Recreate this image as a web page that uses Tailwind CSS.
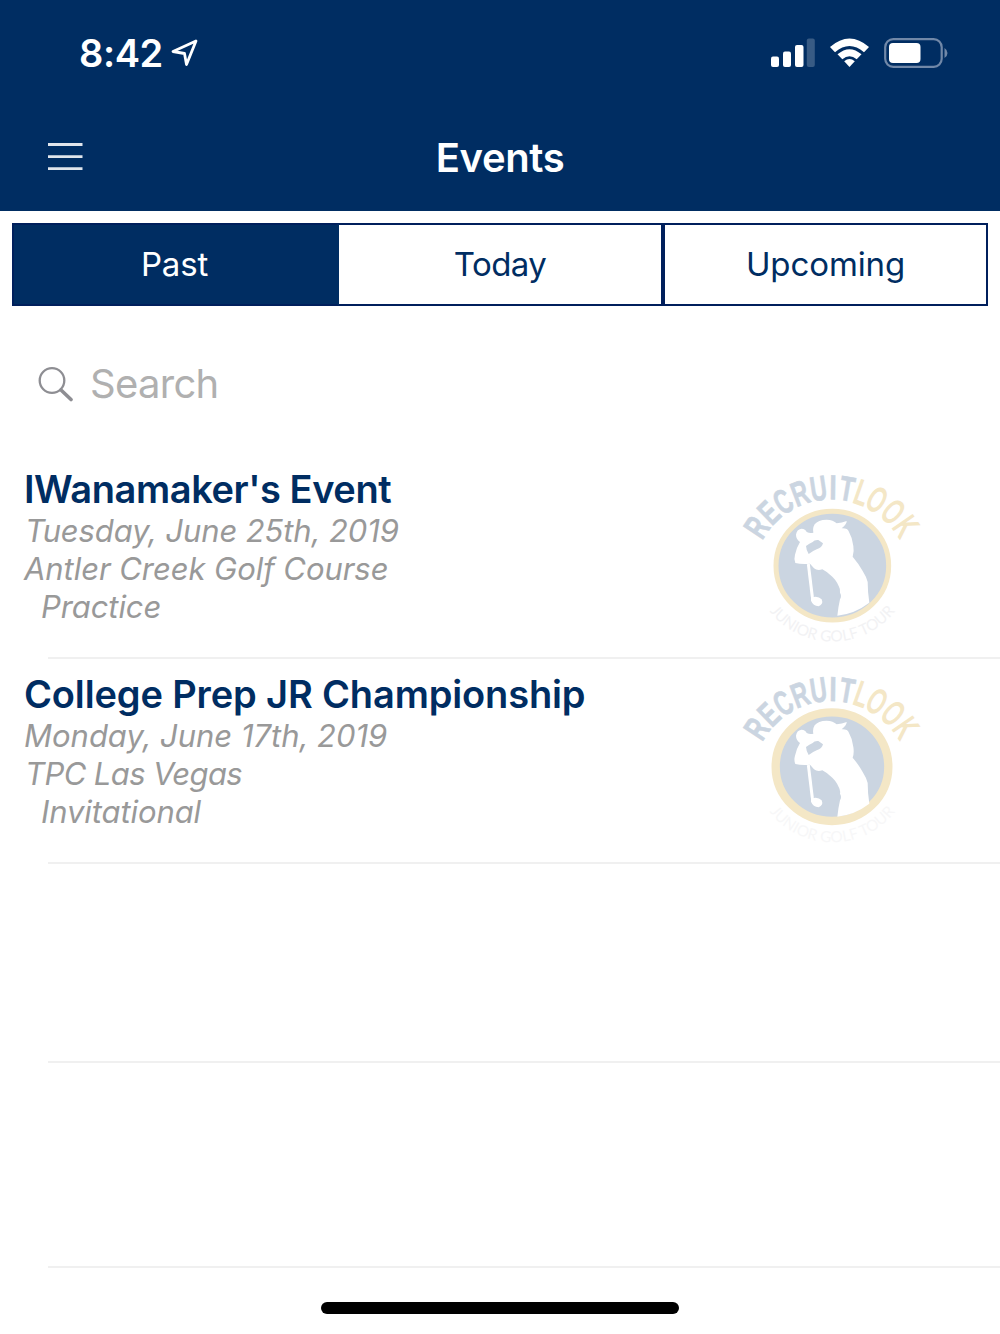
<!DOCTYPE html>
<html lang="en">
  <head>
    <meta charset="UTF-8" />
    <meta name="viewport" content="width=device-width, initial-scale=1.0" />
    <title>Events</title>
    <script src="https://cdn.jsdelivr.net/npm/@tailwindcss/browser@4"></script>
  </head>
  <body class="bg-white font-['Inter',sans-serif] text-[#002d62]">
    <!-- shared logo parts -->
    <svg class="hidden">
      <defs>
        <path id="bottom-arc" d="M67 305A240 240 0 0 0 547 305" />
        <g id="logo-text" font-family="Liberation Sans, sans-serif" font-size="104" text-anchor="middle">
          <g fill="#cbd5e1" stroke="#cbd5e1" stroke-width="2" font-weight="700">
            <text transform="rotate(-56 305 353) translate(305 118) scale(.66 1)">R</text>
            <text transform="rotate(-44 305 353) translate(305 118) scale(.66 1)">E</text>
            <text transform="rotate(-32.500 305 353) translate(305 118) scale(.64 1)">C</text>
            <text transform="rotate(-20.500 305 353) translate(305 118) scale(.66 1)">R</text>
            <text transform="rotate(-8.500 305 353) translate(305 118) scale(.66 1)">U</text>
            <text transform="rotate(.8 305 353) translate(305 118) scale(.75 1)">I</text>
            <text transform="rotate(9.800 305 353) translate(305 118) scale(.7 1)">T</text>
          </g>
          <g fill="#f4e7c6" stroke="#f4e7c6" stroke-width="5">
            <text transform="rotate(19.500 305 353) translate(305 118) scale(.66 1)">L</text>
            <text transform="rotate(30.200 305 353) translate(305 118) scale(.62 1)">O</text>
            <text transform="rotate(43 305 353) translate(305 118) scale(.62 1)">O</text>
            <text transform="rotate(55.200 305 353) translate(305 118) scale(.64 1)">K</text>
          </g>
        </g>
        <g id="golfer" fill="#fff">
          <path d="M322 467Q325 440 330 418Q336 408 330 398Q332 388 326 378Q318 358 300 344Q288 334 277 328Q262 333 252 325L240 311Q215 313 196 309Q191 298 195 284Q199 264 210 246Q198 237 198 224Q200 208 214 206Q227 207 230 216Q240 221 250 218Q247 204 254 193Q264 179 290 179Q310 180 320 190Q336 188 350 183Q351 192 335 205Q353 204 356 214Q368 235 370 258Q373 275 368 290Q386 311 398 333Q409 350 413 366Q413 395 418 428Q375 461 322 467Z" />
          <path d="M228 258Q238 250 248 246Q253 239 265 240L279 250Q276 263 260 268Q248 273 236 282Q229 272 228 258Z" fill="#cbd5e1" />
          <path d="M235 312L247 411" stroke="#fff" stroke-width="9" />
          <path d="M243 403L251 411Q265 408 275 418Q281 433 266 439Q249 437 243 422Z" />
        </g>
      </defs>
    </svg>

    <div class="flex h-[1334px] w-[1000px] flex-col overflow-hidden">
      <header class="h-[211px] shrink-0 bg-[#002d62] text-white">
        <!-- status bar -->
        <div class="flex h-[106px] items-center justify-between pl-[79px] pr-[52px]">
          <div class="flex items-center gap-[8px]">
            <span class="text-[38px] leading-none font-semibold tracking-[-0.4px]">8:42</span>
            <svg class="h-[28px] w-[27px]" viewBox="0 0 27 28" fill="none" stroke="#fff" stroke-width="2.8" stroke-linejoin="round">
              <path d="M25 2L2 12.500L13.500 14.500L15.500 25.500Z" />
            </svg>
          </div>
          <div class="flex items-center">
            <svg class="h-[30px] w-[45px]" viewBox="0 0 45 30" fill="#fff">
              <rect x="1" y="18.500" width="8" height="10.500" rx="2" />
              <rect x="13" y="13.500" width="8" height="15.500" rx="2" />
              <rect x="25" y="7" width="8.500" height="22" rx="2" />
              <rect x="36.800" y="0.500" width="8" height="28.500" rx="2" opacity=".22" />
            </svg>
            <svg class="ml-[14px] h-[30px] w-[41px]" viewBox="0 0 41 30" fill="#fff">
              <path d="M1 9Q20.500 -8 40 9L35 14.200Q20.500 1.700 6 14.200Z" />
              <path d="M8.500 16.300Q20.500 6 32.500 16.300L27.700 21.200Q20.500 15.200 13.300 21.200Z" />
              <path d="M15.200 23.200Q20.500 19 25.800 23.200L20.500 29Z" />
            </svg>
            <svg class="ml-[14px] h-[32px] w-[64px]" viewBox="0 0 64 32" fill="none">
              <rect x="1.200" y="2.200" width="56.500" height="27.600" rx="8" stroke="#7188a8" stroke-width="2.200" />
              <rect x="5" y="6" width="31.500" height="20" rx="4" fill="#fff" />
              <path d="M60.500 11Q63.500 13 63.500 16Q63.500 19 60.500 21Z" fill="#7188a8" />
            </svg>
          </div>
        </div>
        <div class="grid h-[102px] grid-cols-3 items-center">
          <svg class="ml-[48px] h-[30px] w-[35px]" viewBox="0 0 35 30" stroke="#e0e5ec" stroke-width="2.800">
            <path d="M0 2.500H34.500M0 14.700H34.500M0 26.700H34.500" />
          </svg>
          <h1 class="pt-[2px] text-center text-[40px] leading-none font-semibold tracking-[-0.4px]">Events</h1>
        </div>
      </header>

      <div class="mx-[12px] mt-[12px] grid h-[83px] shrink-0 grid-cols-[327px_324px_325px] text-[33px] text-[#002d62]">
        <button class="border-2 border-[#001f5c] border-r-[#002d62] bg-[#002d62] pr-[2px] tracking-[-0.2px] text-white">Past</button>
        <button class="border-2 border-l-0 border-[#001f5c] tracking-[-0.6px]">Today</button>
        <button class="border-2 border-[#001f5c] tracking-[-0.1px]">Upcoming</button>
      </div>

      <div class="flex h-[154px] shrink-0 items-center gap-[17px] pt-[2px] pl-[38px]">
        <svg class="h-[36px] w-[35px]" viewBox="0 0 35 36" fill="none" stroke="#8e8e93">
          <circle cx="14" cy="14.500" r="12.300" stroke-width="2.300" />
          <path d="M23 24L33 33.500" stroke-width="3.600" stroke-linecap="round" />
        </svg>
        <span class="text-[40px] leading-none tracking-[-0.7px] text-[#b0b0b0]">Search</span>
      </div>

      <ul class="shrink-0">
        <li class="flex h-[197px] justify-between pr-[70px] pl-[24px]">
          <div class="pt-[5px]">
            <h2 class="text-[38px] leading-[48px] font-semibold tracking-[-0.42px]">IWanamaker's Event</h2>
            <div class="-mt-px text-[31px] leading-[38px] text-[#999] italic">
              <p class="pl-px tracking-[-0.12px]">Tuesday, June 25th, 2019</p>
              <p class="tracking-[-0.06px]">Antler Creek Golf Course</p>
              <p class="pl-[17px] tracking-[-0.1px]">Practice</p>
            </div>
          </div>
          <svg class="h-[200px] w-[200px]" viewBox="0 0 600 600">
            <use href="#logo-text" />
            <ellipse cx="307" cy="317" rx="169" ry="163" fill="#cbd5e1" stroke="#f4e7c6" stroke-width="15" />
            <use href="#golfer" />
            <text font-family="Lato, sans-serif" font-size="46" fill="#f2f2f4" text-anchor="middle"><textPath href="#bottom-arc" startOffset="50%">JUNIOR GOLF TOUR</textPath></text>
          </svg>
        </li>
        <li class="ml-[48px] h-[2px] bg-[#f0f0f0]"></li>
        <li class="flex h-[203px] justify-between pr-[70px] pl-[24px]">
          <div class="pt-[11px]">
            <h2 class="text-[38px] leading-[48px] font-semibold tracking-[-0.14px]">College Prep JR Championship</h2>
            <div class="-mt-px text-[31px] leading-[38px] text-[#999] italic">
              <p class="tracking-[-0.02px]">Monday, June 17th, 2019</p>
              <p class="pl-px tracking-[-0.6px]">TPC Las Vegas</p>
              <p class="pl-[17px] tracking-[-0.1px]">Invitational</p>
            </div>
          </div>
          <svg class="mt-[4px] h-[199px] w-[200px]" viewBox="0 -3 600 597">
            <use href="#logo-text" y="-7" />
            <ellipse cx="306" cy="308" rx="169" ry="163" fill="#cbd5e1" stroke="#f4e7c6" stroke-width="25" />
            <use href="#golfer" y="-9" />
            <text font-family="Lato, sans-serif" font-size="46" fill="#f7f7f8" text-anchor="middle" transform="translate(0 -10)"><textPath href="#bottom-arc" startOffset="50%">JUNIOR GOLF TOUR</textPath></text>
          </svg>
        </li>
        <li class="ml-[48px] h-[2px] bg-[#f0f0f0]"></li>
        <li class="h-[197px]"></li>
        <li class="ml-[48px] h-[2px] bg-[#f0f0f0]"></li>
        <li class="h-[203px]"></li>
        <li class="ml-[48px] h-[2px] bg-[#f0f0f0]"></li>
      </ul>

      <!-- home indicator -->
      <div class="mx-auto mt-[34px] h-[12px] w-[358px] shrink-0 rounded-full bg-black"></div>
    </div>
  </body>
</html>
